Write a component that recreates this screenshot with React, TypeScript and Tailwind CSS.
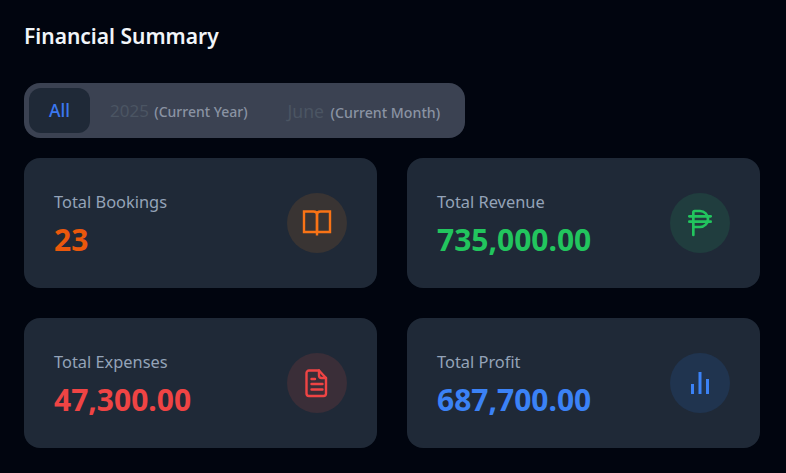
import { PhilippinePeso } from "lucide-react";

function BookIcon() {
  return (
    <svg width="32" height="32" viewBox="0 0 32 32" fill="none" stroke="currentColor" strokeWidth="2.4" strokeLinejoin="miter">
      <path d="M3 4.500h9.500c2 0 3.500 1.200 3.500 3.200V25H3z" />
      <path d="M29 4.500h-9.500C17.500 4.500 16 5.700 16 7.700V25h13z" />
      <path d="M16 25v3.500" />
    </svg>
  );
}

function DocIcon() {
  return (
    <svg width="32" height="32" viewBox="0 0 32 32" fill="none" stroke="currentColor" strokeWidth="2.4" strokeLinecap="round" strokeLinejoin="round">
      <path d="M8 3.500h10l7 7.500v15.500a2.500 2.500 0 0 1-2.500 2.500H8a2.500 2.500 0 0 1-2.500-2.500V6A2.500 2.500 0 0 1 8 3.500z" />
      <path d="M18 3.500v5a2.500 2.500 0 0 0 2.500 2.500H25" />
      <path d="M10.500 12h3.500M10.500 17h11M10.500 22.500h11" />
    </svg>
  );
}

function BarsIcon() {
  return (
    <svg width="32" height="32" viewBox="0 0 32 32" fill="currentColor">
      <rect x="7" y="17" width="3" height="10" />
      <rect x="14.500" y="5" width="3" height="22" />
      <rect x="22" y="12" width="3" height="15" />
    </svg>
  );
}

function Card({ label, value, valueClass, circleClass, iconClass, icon }: { label: string; value: string; valueClass: string; circleClass: string; iconClass: string; icon: React.ReactNode }) {
  return (
    <div className="h-[130px] rounded-2xl bg-[#1f2937] px-[30px] flex items-center justify-between">
      <div className="flex flex-col pt-1">
        <span className="text-[16.4px] leading-6 text-[#94a3b8]">{label}</span>
        <span className={`mt-[6px] text-[30px] leading-10 font-bold ${valueClass}`}>{value}</span>
      </div>
      <div className={`w-[60px] h-[60px] rounded-full flex items-center justify-center ${circleClass} ${iconClass}`}>{icon}</div>
    </div>
  );
}

export default function App() {
  return (
    <div className="min-h-[473px] bg-[#01050f] px-6 pt-[20px] font-['Noto_Sans','Open_Sans',sans-serif]">
      <h1 className="text-[21px] leading-8 font-semibold text-[#f1f5f9]">Financial Summary</h1>
      <div className="mt-[31px] w-[441px] h-[55px] rounded-2xl bg-[#3b4252] p-[5px] flex items-center">
        <div className="w-[61px] h-[45px] rounded-xl bg-[#1f2937] flex items-center justify-center text-[17.6px] font-medium text-[#3b78f0]">All</div>
        <div className="ml-5 pt-px text-[17px] text-[#4b5563]">2025 <span className="ml-px text-sm font-medium text-[#8a93a3]">(Current Year)</span></div>
        <div className="ml-10 pt-px text-[17.6px] text-[#4b5563]">June <span className="ml-[2px] text-[14.2px] font-medium text-[#8a93a3]">(Current Month)</span></div>
      </div>
      <div className="mt-5 grid grid-cols-2 gap-[30px] w-[736px]">
        <Card label="Total Bookings" value="23" valueClass="text-[#ea580c]" circleClass="bg-[#393433]" iconClass="text-[#f97316]" icon={<BookIcon />} />
        <Card label="Total Revenue" value="735,000.00" valueClass="text-[#22c55e]" circleClass="bg-[#203d3e]" iconClass="text-[#22c55e]" icon={<PhilippinePeso size={32} strokeWidth={2} />} />
        <Card label="Total Expenses" value="47,300.00" valueClass="text-[#ef4444]" circleClass="bg-[#3a2e38]" iconClass="text-[#ef4444]" icon={<DocIcon />} />
        <Card label="Total Profit" value="687,700.00" valueClass="text-[#3b82f6]" circleClass="bg-[#20344f]" iconClass="text-[#3b82f6]" icon={<BarsIcon />} />
      </div>
    </div>
  );
}
